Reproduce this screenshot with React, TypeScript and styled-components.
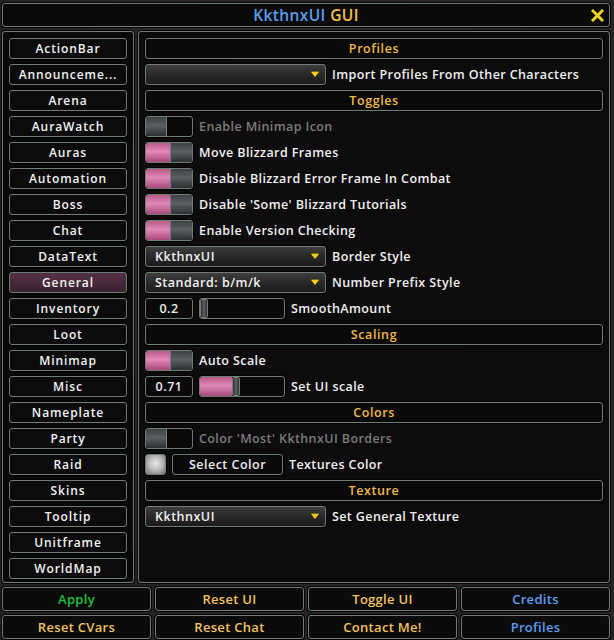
import styled, { createGlobalStyle, css } from "styled-components";

const GlobalStyle = createGlobalStyle`
  html, body {
    margin: 0;
    padding: 0;
    background: #2a2528;
  }
  body {
    font-family: "Open Sans", "Noto Sans", "DejaVu Sans", sans-serif;
    color: #ececec;
  }
`;

const edge = css`
  border: 1px solid #6f7d76;
  border-radius: 3px;
  box-shadow: 0 0 0 1px #050505;
`;

const Window = styled.div`
  width: 614px;
  height: 640px;
  box-sizing: border-box;
  padding: 3px 4px 1px 2px;
  display: flex;
  flex-direction: column;
  gap: 4px;
  background: radial-gradient(ellipse at 50% 40%, #3a3033 0%, #262225 70%);
`;

const TitleBar = styled.div`
  ${edge};
  height: 24px;
  flex-shrink: 0;
  box-sizing: border-box;
  background: #0b0a0a;
  display: grid;
  grid-template-columns: 1fr auto 1fr;
  align-items: center;
`;

const Title = styled.div`
  grid-column: 2;
  font-size: 15.5px;
  font-weight: 600;
  letter-spacing: 0.4px;
  color: #5d9df2;
  & span {
    color: #f5c04e;
  }
`;

const Close = styled.div`
  justify-self: end;
  margin-right: 5px;
  display: flex;
`;

const Body = styled.div`
  display: flex;
  gap: 4px;
  height: 552px;
  flex-shrink: 0;
`;

const Sidebar = styled.div`
  ${edge};
  width: 132px;
  box-sizing: border-box;
  padding: 6px 6px 3px;
  background: rgba(10, 9, 9, 0.96);
  display: flex;
  flex-direction: column;
  gap: 5px;
`;

const NavButton = styled.div<{ $active?: boolean }>`
  ${edge};
  height: 21px;
  flex-shrink: 0;
  box-sizing: border-box;
  display: flex;
  align-items: center;
  justify-content: center;
  font-size: 12px;
  font-weight: 600;
  letter-spacing: 0.9px;
  color: #f2f2f2;
  background: ${p => (p.$active ? "linear-gradient(#553246, #3a2230)" : "#0c0c0c")};
`;

const Main = styled.div`
  ${edge};
  flex: 1;
  box-sizing: border-box;
  padding: 6px 6px 6px 6px;
  background: rgba(12, 11, 11, 0.96);
  display: flex;
  flex-direction: column;
  gap: 5px;
`;

const Header = styled.div`
  ${edge};
  height: 21px;
  flex-shrink: 0;
  box-sizing: border-box;
  display: flex;
  align-items: center;
  justify-content: center;
  background: #0a0a0a;
  font-size: 12.5px;
  font-weight: 600;
  letter-spacing: 0.6px;
  color: #f0b848;
`;

const Row = styled.div`
  height: 21px;
  flex-shrink: 0;
  display: flex;
  align-items: center;
  gap: 6px;
`;

const Label = styled.div<{ $dim?: boolean }>`
  font-size: 12.5px;
  font-weight: 600;
  letter-spacing: 0.4px;
  color: ${p => (p.$dim ? "#7c7c7c" : "#f0f0f0")};
  white-space: nowrap;
`;

const Dropdown = styled.div`
  ${edge};
  width: 181px;
  height: 21px;
  box-sizing: border-box;
  display: flex;
  align-items: center;
  justify-content: space-between;
  padding: 0 6px 0 9px;
  background: linear-gradient(#3e3e3e 0%, #2b2b2b 45%, #1b1b1b 100%);
  font-size: 12.5px;
  font-weight: 600;
  letter-spacing: 0.5px;
  color: #f0f0f0;
`;

const Arrow = styled.div`
  width: 0;
  height: 0;
  border-left: 4px solid transparent;
  border-right: 4px solid transparent;
  border-top: 5px solid #f3cc1c;
  filter: drop-shadow(0 -1px 0 #7a6a10);
`;

const Switch = styled.div`
  ${edge};
  width: 48px;
  height: 21px;
  box-sizing: border-box;
  display: flex;
  background: #0a0a0a;
  overflow: hidden;
`;

const PinkFill = styled.div<{ $width?: string; $divider?: boolean }>`
  width: ${p => p.$width ?? "26px"};
  height: 100%;
  background: linear-gradient(#b85a8a 0%, #e088b8 45%, #a84a7c 100%);
  border-right: ${p => (p.$divider === false ? "none" : "1px solid #6f7d76")};
  box-sizing: border-box;
`;

const Knob = styled.div<{ $w?: number }>`
  width: ${p => p.$w ?? 21}px;
  height: 100%;
  box-sizing: border-box;
  border-right: 1px solid #6f7d76;
  background: linear-gradient(#3e4144 0%, #5c6064 45%, #2e3032 100%);
  &:last-child:not(:first-child) {
    border-right: none;
  }
`;

const ValueBox = styled.div`
  ${edge};
  width: 48px;
  height: 21px;
  box-sizing: border-box;
  display: flex;
  align-items: center;
  justify-content: center;
  background: #0a0a0a;
  font-size: 12.5px;
  font-weight: 600;
  letter-spacing: 0.5px;
`;

const Slider = styled.div`
  ${edge};
  width: 86px;
  height: 21px;
  box-sizing: border-box;
  display: flex;
  align-items: stretch;
  background: #0a0a0a;
  overflow: hidden;
`;

const SliderThumb = styled.div`
  width: 8px;
  box-sizing: border-box;
  border: 1px solid #6f7d76;
  border-radius: 2px;
  background: linear-gradient(90deg, #303234, #5c6064, #303234);
`;

const Swatch = styled.div`
  ${edge};
  width: 21px;
  height: 21px;
  box-sizing: border-box;
  background: radial-gradient(circle at 50% 45%, #e6e6e6 0%, #b8b8b8 50%, #707070 100%);
`;

const PlainButton = styled.div`
  ${edge};
  width: 111px;
  height: 21px;
  box-sizing: border-box;
  display: flex;
  align-items: center;
  justify-content: center;
  background: #0a0a0a;
  font-size: 12.5px;
  font-weight: 600;
  letter-spacing: 0.5px;
`;

const Footer = styled.div`
  display: grid;
  grid-template-columns: repeat(4, 1fr);
  grid-auto-rows: 24px;
  gap: 4px;
  flex-shrink: 0;
`;

const FooterButton = styled.div<{ $tone: "green" | "gold" | "blue" }>`
  ${edge};
  box-sizing: border-box;
  display: flex;
  align-items: center;
  justify-content: center;
  background: #0b0b0b;
  font-size: 13px;
  font-weight: 600;
  letter-spacing: 0.3px;
  color: ${p => (p.$tone === "green" ? "#1fc23c" : p.$tone === "blue" ? "#5d9df2" : "#f3c260")};
`;

const navItems = [
  "ActionBar",
  "Announceme...",
  "Arena",
  "AuraWatch",
  "Auras",
  "Automation",
  "Boss",
  "Chat",
  "DataText",
  "General",
  "Inventory",
  "Loot",
  "Minimap",
  "Misc",
  "Nameplate",
  "Party",
  "Raid",
  "Skins",
  "Tooltip",
  "Unitframe",
  "WorldMap"
];

const footerItems: { label: string; tone: "green" | "gold" | "blue" }[] = [
  { label: "Apply", tone: "green" },
  { label: "Reset UI", tone: "gold" },
  { label: "Toggle UI", tone: "gold" },
  { label: "Credits", tone: "blue" },
  { label: "Reset CVars", tone: "gold" },
  { label: "Reset Chat", tone: "gold" },
  { label: "Contact Me!", tone: "gold" },
  { label: "Profiles", tone: "blue" }
];

const Toggle = ({ on }: { on: boolean }) => (
  <Switch>
    {on ? (
      <>
        <PinkFill />
        <Knob $w={21} />
      </>
    ) : (
      <Knob $w={21} />
    )}
  </Switch>
);

const Select = ({ value }: { value?: string }) => (
  <Dropdown>
    <span>{value ?? ""}</span>
    <Arrow />
  </Dropdown>
);

const CheckRow = ({ on, label, dim }: { on: boolean; label: string; dim?: boolean }) => (
  <Row>
    <Toggle on={on} />
    <Label $dim={dim}>{label}</Label>
  </Row>
);

const App = () => (
  <>
    <GlobalStyle />
    <Window>
      <TitleBar>
        <Title>
          KkthnxUI <span>GUI</span>
        </Title>
        <Close>
          <svg width="13" height="13" viewBox="0 0 13 13">
            <path d="M2 2 L11 11 M11 2 L2 11" stroke="#f3d21e" strokeWidth="3" strokeLinecap="square" />
          </svg>
        </Close>
      </TitleBar>
      <Body>
        <Sidebar>
          {navItems.map(item => (
            <NavButton key={item} $active={item === "General"}>
              {item}
            </NavButton>
          ))}
        </Sidebar>
        <Main>
          <Header>Profiles</Header>
          <Row>
            <Select />
            <Label>Import Profiles From Other Characters</Label>
          </Row>
          <Header>Toggles</Header>
          <CheckRow on={false} dim label="Enable Minimap Icon" />
          <CheckRow on label="Move Blizzard Frames" />
          <CheckRow on label="Disable Blizzard Error Frame In Combat" />
          <CheckRow on label="Disable 'Some' Blizzard Tutorials" />
          <CheckRow on label="Enable Version Checking" />
          <Row>
            <Select value="KkthnxUI" />
            <Label>Border Style</Label>
          </Row>
          <Row>
            <Select value="Standard: b/m/k" />
            <Label>Number Prefix Style</Label>
          </Row>
          <Row>
            <ValueBox>0.2</ValueBox>
            <Slider>
              <SliderThumb />
            </Slider>
            <Label>SmoothAmount</Label>
          </Row>
          <Header>Scaling</Header>
          <CheckRow on label="Auto Scale" />
          <Row>
            <ValueBox>0.71</ValueBox>
            <Slider>
              <PinkFill $width="32px" $divider={false} />
              <SliderThumb />
            </Slider>
            <Label>Set UI scale</Label>
          </Row>
          <Header>Colors</Header>
          <CheckRow on={false} dim label="Color 'Most' KkthnxUI Borders" />
          <Row>
            <Swatch />
            <PlainButton>Select Color</PlainButton>
            <Label>Textures Color</Label>
          </Row>
          <Header>Texture</Header>
          <Row>
            <Select value="KkthnxUI" />
            <Label>Set General Texture</Label>
          </Row>
        </Main>
      </Body>
      <Footer>
        {footerItems.map(f => (
          <FooterButton key={f.label} $tone={f.tone}>
            {f.label}
          </FooterButton>
        ))}
      </Footer>
    </Window>
  </>
);

export default App;
